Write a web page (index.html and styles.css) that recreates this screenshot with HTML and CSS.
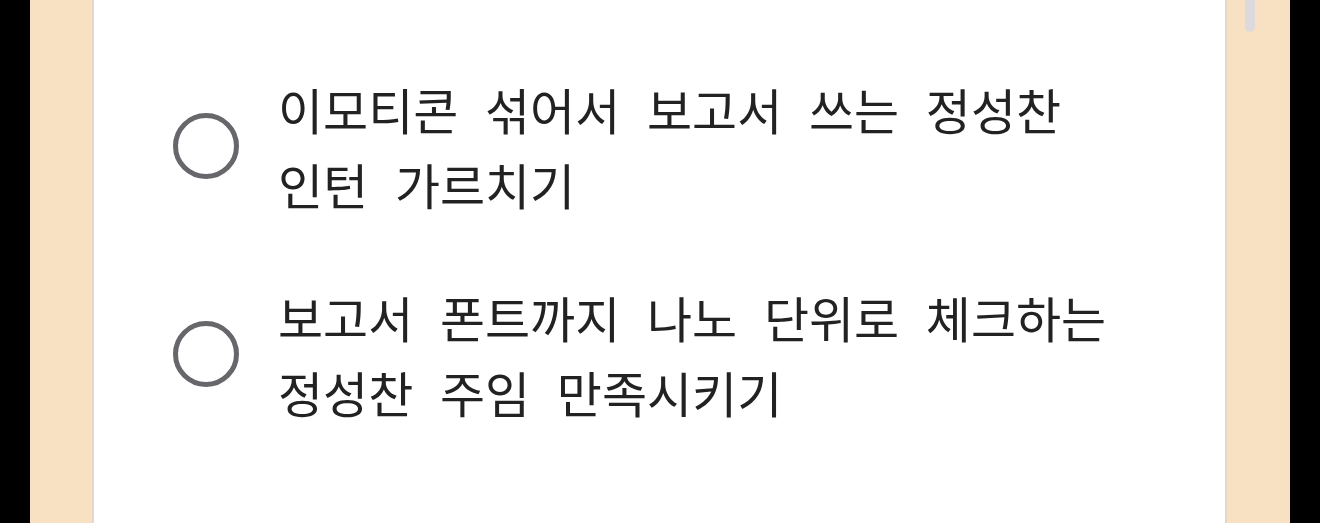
FILE: index.html
```html
<!DOCTYPE html>
<html lang="ko">
<head>
<meta charset="utf-8">
<link rel="stylesheet" href="styles.css">
</head>
<body>
<div class="frame">
  <div class="page">
    <div class="card">
      <ul class="options">
        <li class="option">
          <span class="radio"></span>
          <span class="label">이모티콘 섞어서 보고서 쓰는 정성찬<br>인턴 가르치기</span>
        </li>
        <li class="option">
          <span class="radio"></span>
          <span class="label">보고서 폰트까지 나노 단위로 체크하는<br>정성찬 주임 만족시키기</span>
        </li>
      </ul>
    </div>
    <div class="scroll-thumb"></div>
  </div>
</div>
</body>
</html>
```

FILE: styles.css
```css
html, body {
  margin: 0;
  padding: 0;
  height: 100%;
  overflow: hidden;
}
.frame {
  background: #000;
  padding: 0 30px;
  height: 523px;
  box-sizing: border-box;
}
.page {
  position: relative;
  background: #f8e0c2;
  height: 100%;
  padding: 0 63px 0 62px;
  box-sizing: border-box;
}
.card {
  background: #fff;
  height: 100%;
  border-left: 2px solid #e4d8ca;
  border-right: 2px solid #e4d8ca;
}
.options {
  list-style: none;
  margin: 0;
  padding: 71px 0 0 79px;
  display: flex;
  flex-direction: column;
  gap: 58px;
}
.option {
  display: flex;
  align-items: center;
  gap: 39px;
}
.radio {
  flex: none;
  width: 56px;
  height: 56px;
  border: 5px solid #66666b;
  border-radius: 50%;
}
.label {
  font-family: "Noto Sans CJK KR", "Noto Sans", sans-serif;
  font-size: 49px;
  line-height: 75px;
  word-spacing: 13px;
  color: #222;
  white-space: nowrap;
}
.scroll-thumb {
  position: absolute;
  top: 0;
  right: 35px;
  width: 10px;
  height: 32px;
  border-radius: 0 0 5px 5px;
  background: #dcdadd;
}
```
